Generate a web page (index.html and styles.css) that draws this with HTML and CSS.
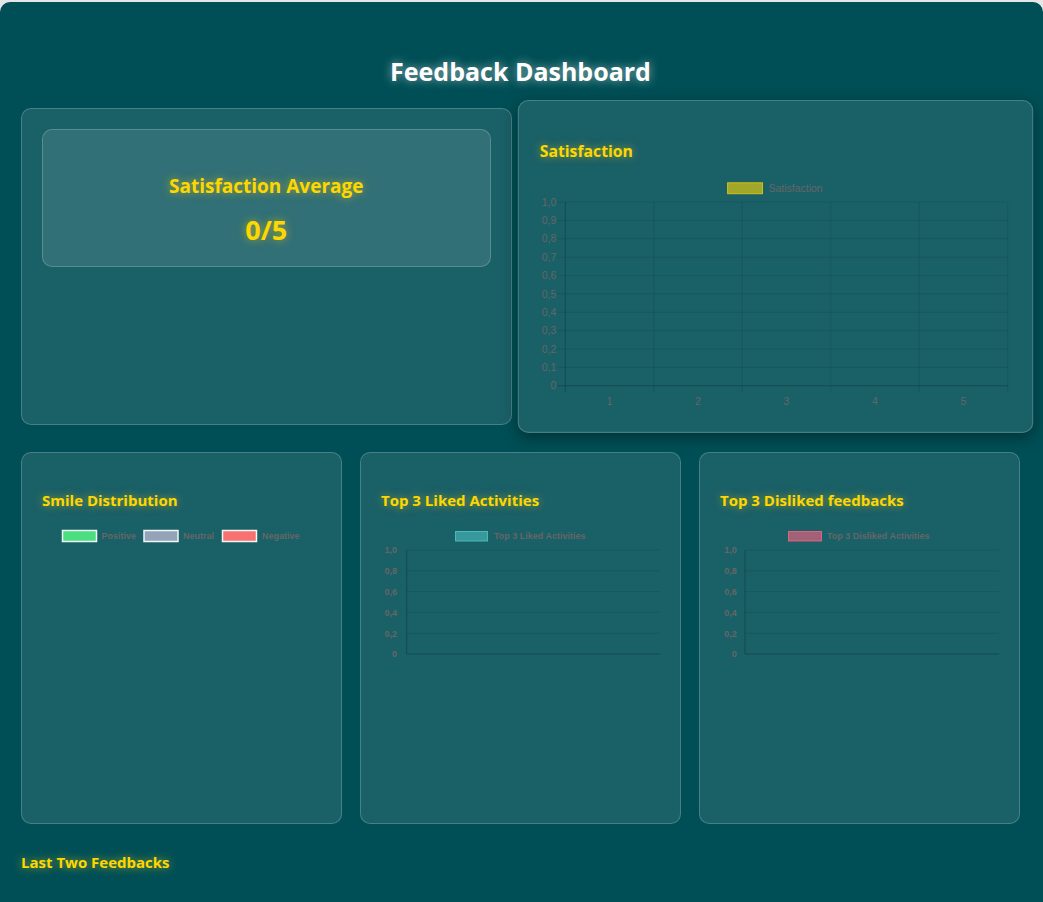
FILE: index.html
```html
<!DOCTYPE html>
<html lang="en">
<head>
<meta charset="utf-8">
<title>Feedback Dashboard</title>
<link rel="stylesheet" href="styles.css">
</head>
<body>
<div class="dashboard">
  <h1 class="title">Feedback Dashboard</h1>

  <div class="top-row">
    <section class="card">
      <div class="stat-box">
        <h2 class="stat-label">Satisfaction Average</h2>
        <p class="stat-value">0/5</p>
      </div>
    </section>

    <section class="card card--hover">
      <h3 class="card-title">Satisfaction</h3>
      <svg class="chart" viewBox="0 0 471.5 236" xmlns="http://www.w3.org/2000/svg">
        <rect x="188" y="5" width="35" height="11" fill="rgba(255,215,0,0.6)" stroke="rgba(255,215,0,0.7)" stroke-width="1"/>
        <text x="229" y="14.3" class="lbl-top">Satisfaction</text>
        <g class="grid">
          <line x1="17.5" y1="24.3" x2="468.5" y2="24.3"/>
          <line x1="17.5" y1="42.7" x2="468.5" y2="42.7"/>
          <line x1="17.5" y1="61.1" x2="468.5" y2="61.1"/>
          <line x1="17.5" y1="79.5" x2="468.5" y2="79.5"/>
          <line x1="17.5" y1="97.9" x2="468.5" y2="97.9"/>
          <line x1="17.5" y1="116.3" x2="468.5" y2="116.3"/>
          <line x1="17.5" y1="134.7" x2="468.5" y2="134.7"/>
          <line x1="17.5" y1="153.1" x2="468.5" y2="153.1"/>
          <line x1="17.5" y1="171.5" x2="468.5" y2="171.5"/>
          <line x1="17.5" y1="189.9" x2="468.5" y2="189.9"/>
          <line x1="114.1" y1="24.3" x2="114.1" y2="215"/>
          <line x1="202.7" y1="24.3" x2="202.7" y2="215"/>
          <line x1="291.3" y1="24.3" x2="291.3" y2="215"/>
          <line x1="379.9" y1="24.3" x2="379.9" y2="215"/>
          <line x1="468.5" y1="24.3" x2="468.5" y2="215"/>
        </g>
        <g class="axis">
          <line x1="17.5" y1="208.3" x2="468.5" y2="208.3"/>
          <line x1="25.5" y1="24.3" x2="25.5" y2="215"/>
        </g>
        <g class="lbl-top" text-anchor="end">
          <text x="16.5" y="28">1,0</text>
          <text x="16.5" y="46.4">0,9</text>
          <text x="16.5" y="64.8">0,8</text>
          <text x="16.5" y="83.2">0,7</text>
          <text x="16.5" y="101.6">0,6</text>
          <text x="16.5" y="120">0,5</text>
          <text x="16.5" y="138.4">0,4</text>
          <text x="16.5" y="156.8">0,3</text>
          <text x="16.5" y="175.2">0,2</text>
          <text x="16.5" y="193.6">0,1</text>
          <text x="16.5" y="212">0</text>
        </g>
        <g class="lbl-top" text-anchor="middle">
          <text x="69.8" y="228">1</text>
          <text x="158.4" y="228">2</text>
          <text x="247" y="228">3</text>
          <text x="335.6" y="228">4</text>
          <text x="424.2" y="228">5</text>
        </g>
      </svg>
    </section>
  </div>

  <div class="bottom-row">
    <section class="card">
      <h3 class="card-title">Smile Distribution</h3>
      <svg class="chart" viewBox="0 0 279 279" xmlns="http://www.w3.org/2000/svg">
        <rect x="20.5" y="4.5" width="34" height="11" fill="#4ade80" stroke="#eef6f6" stroke-width="1.5"/>
        <text x="59.5" y="13.3" class="lbl-bottom">Positive</text>
        <rect x="102" y="4.5" width="34" height="11" fill="#94a3b8" stroke="#eef6f6" stroke-width="1.5"/>
        <text x="141" y="13.3" class="lbl-bottom">Neutral</text>
        <rect x="180.5" y="4.5" width="34" height="11" fill="#f87171" stroke="#eef6f6" stroke-width="1.5"/>
        <text x="220" y="13.3" class="lbl-bottom">Negative</text>
      </svg>
    </section>

    <section class="card">
      <h3 class="card-title">Top 3 Liked Activities</h3>
      <svg class="chart" viewBox="0 0 279 139.5" xmlns="http://www.w3.org/2000/svg">
        <rect x="74.5" y="5.5" width="32" height="9.5" fill="rgba(75,192,192,0.6)" stroke="rgba(75,192,192,0.9)" stroke-width="1"/>
        <text x="113" y="13.3" class="lbl-bottom">Top 3 Liked Activities</text>
        <g class="grid">
          <line x1="25.7" y1="24" x2="279" y2="24"/>
          <line x1="25.7" y1="44.8" x2="279" y2="44.8"/>
          <line x1="25.7" y1="65.6" x2="279" y2="65.6"/>
          <line x1="25.7" y1="86.4" x2="279" y2="86.4"/>
          <line x1="25.7" y1="107.2" x2="279" y2="107.2"/>
        </g>
        <g class="axis">
          <line x1="25.7" y1="128" x2="279" y2="128"/>
          <line x1="25.7" y1="24" x2="25.7" y2="128"/>
        </g>
        <g class="lbl-bottom" text-anchor="end">
          <text x="16" y="27.3">1,0</text>
          <text x="16" y="48.1">0,8</text>
          <text x="16" y="68.9">0,6</text>
          <text x="16" y="89.7">0,4</text>
          <text x="16" y="110.5">0,2</text>
          <text x="16" y="131.3">0</text>
        </g>
      </svg>
    </section>

    <section class="card">
      <h3 class="card-title">Top 3 Disliked feedbacks</h3>
      <svg class="chart" viewBox="0 0 279 139.5" xmlns="http://www.w3.org/2000/svg">
        <rect x="68.5" y="5.5" width="33" height="9.5" fill="rgba(255,99,132,0.6)" stroke="rgba(255,99,132,0.8)" stroke-width="1"/>
        <text x="107" y="13.3" class="lbl-bottom">Top 3 Disliked Activities</text>
        <g class="grid">
          <line x1="25" y1="24" x2="279" y2="24"/>
          <line x1="25" y1="44.8" x2="279" y2="44.8"/>
          <line x1="25" y1="65.6" x2="279" y2="65.6"/>
          <line x1="25" y1="86.4" x2="279" y2="86.4"/>
          <line x1="25" y1="107.2" x2="279" y2="107.2"/>
        </g>
        <g class="axis">
          <line x1="25" y1="128" x2="279" y2="128"/>
          <line x1="25" y1="24" x2="25" y2="128"/>
        </g>
        <g class="lbl-bottom" text-anchor="end">
          <text x="16.7" y="27.3">1,0</text>
          <text x="16.7" y="48.1">0,8</text>
          <text x="16.7" y="68.9">0,6</text>
          <text x="16.7" y="89.7">0,4</text>
          <text x="16.7" y="110.5">0,2</text>
          <text x="16.7" y="131.3">0</text>
        </g>
      </svg>
    </section>
  </div>

  <h3 class="section-title">Last Two Feedbacks</h3>
</div>
</body>
</html>
```

FILE: styles.css
```css
html, body {
  margin: 0;
  padding: 0;
}

body {
  background: #e6e6e6;
  font-family: "Open Sans", "Noto Sans", sans-serif;
  padding-top: 2px;
}

.dashboard {
  background: #004f56;
  border-radius: 10px 10px 0 0;
  min-height: 900px;
  padding: 0 23px 20px 21px;
  box-sizing: border-box;
}

.title {
  margin: 0;
  padding: 54px 0 21px;
  text-align: center;
  color: #ffffff;
  font-size: 25px;
  line-height: 31px;
  font-weight: 700;
  text-shadow: 0 0 10px rgba(255, 255, 255, 0.55);
}

.top-row {
  display: grid;
  grid-template-columns: 1fr 1fr;
  gap: 18px;
}

.bottom-row {
  display: grid;
  grid-template-columns: 1fr 1fr 1fr;
  gap: 18px;
  margin-top: 27px;
}

.card {
  background: rgba(255, 255, 255, 0.1);
  border: 1px solid rgba(255, 255, 255, 0.2);
  border-radius: 10px;
  padding: 20px 20px 18px;
  min-width: 0;
}

.card--hover {
  transform: scale(1.05);
  box-shadow: 0 4px 14px rgba(0, 0, 0, 0.35);
}

.stat-box {
  background: rgba(255, 255, 255, 0.1);
  border: 1px solid rgba(255, 255, 255, 0.2);
  border-radius: 10px;
  padding: 20px;
  text-align: center;
}

.stat-label {
  margin: 25px 0 15px;
  color: #ffd700;
  font-size: 19px;
  line-height: 23px;
  font-weight: 700;
  text-shadow: 0 0 8px rgba(255, 215, 0, 0.55);
}

.stat-value {
  margin: 0;
  color: #ffd700;
  font-size: 27px;
  line-height: 33px;
  font-weight: 700;
  text-shadow: 0 0 8px rgba(255, 215, 0, 0.55);
}

.card-title {
  margin: 17px 0 16px;
  color: #ffd700;
  font-size: 15px;
  line-height: 20px;
  font-weight: 700;
  text-shadow: 0 0 8px rgba(255, 215, 0, 0.55);
}

.chart {
  display: block;
  width: 100%;
  height: auto;
}

.grid line {
  stroke: rgba(0, 0, 0, 0.1);
  stroke-width: 1;
}

.axis line {
  stroke: rgba(0, 0, 0, 0.22);
  stroke-width: 1;
}

.lbl-top {
  font-family: "Liberation Sans", Arial, sans-serif;
  font-size: 10.5px;
  fill: #666666;
}

.lbl-bottom {
  font-family: "Liberation Sans", Arial, sans-serif;
  font-size: 9px;
  font-weight: 700;
  fill: #666666;
}

.section-title {
  margin: 29px 0 0;
  color: #ffd700;
  font-size: 15px;
  line-height: 18px;
  font-weight: 700;
  text-shadow: 0 0 8px rgba(255, 215, 0, 0.6);
}
```
